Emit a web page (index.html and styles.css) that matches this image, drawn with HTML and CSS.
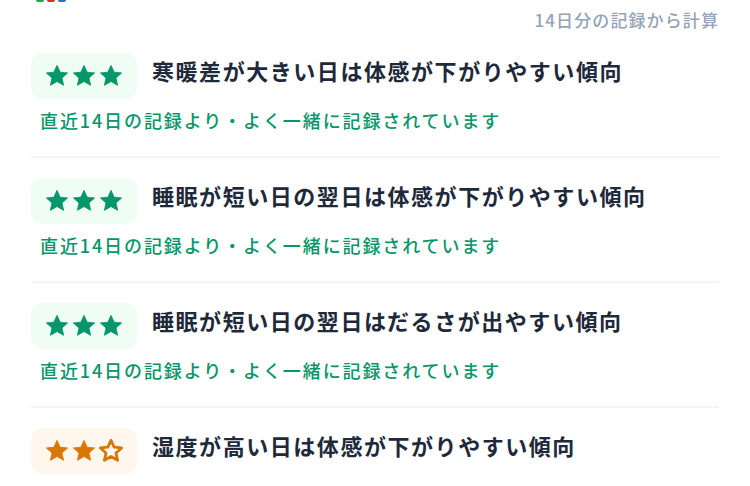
FILE: index.html
```html
<!DOCTYPE html>
<html lang="ja">
<head>
<meta charset="utf-8">
<link rel="stylesheet" href="styles.css">
</head>
<body>
<div class="page">
  <div class="top">
    <div class="logo"><span class="sq g"></span><span class="sq r"></span><span class="sq b"></span></div>
    <div class="basis">14日分の記録から計算</div>
  </div>

  <div class="item">
    <div class="row">
      <div class="badge high">
        <svg class="star" viewBox="0 0 24 24"><path d="M12 2.2l2.9 6.3 6.9.7-5.2 4.6 1.5 6.8L12 17.1l-6.1 3.5 1.5-6.8-5.2-4.6 6.9-.7z"/></svg>
        <svg class="star" viewBox="0 0 24 24"><path d="M12 2.2l2.9 6.3 6.9.7-5.2 4.6 1.5 6.8L12 17.1l-6.1 3.5 1.5-6.8-5.2-4.6 6.9-.7z"/></svg>
        <svg class="star" viewBox="0 0 24 24"><path d="M12 2.2l2.9 6.3 6.9.7-5.2 4.6 1.5 6.8L12 17.1l-6.1 3.5 1.5-6.8-5.2-4.6 6.9-.7z"/></svg>
      </div>
      <div class="title">寒暖差が大きい日は体感が下がりやすい傾向</div>
    </div>
    <div class="sub high">直近14日の記録より・よく一緒に記録されています</div>
  </div>

  <div class="item">
    <div class="row">
      <div class="badge high">
        <svg class="star" viewBox="0 0 24 24"><path d="M12 2.2l2.9 6.3 6.9.7-5.2 4.6 1.5 6.8L12 17.1l-6.1 3.5 1.5-6.8-5.2-4.6 6.9-.7z"/></svg>
        <svg class="star" viewBox="0 0 24 24"><path d="M12 2.2l2.9 6.3 6.9.7-5.2 4.6 1.5 6.8L12 17.1l-6.1 3.5 1.5-6.8-5.2-4.6 6.9-.7z"/></svg>
        <svg class="star" viewBox="0 0 24 24"><path d="M12 2.2l2.9 6.3 6.9.7-5.2 4.6 1.5 6.8L12 17.1l-6.1 3.5 1.5-6.8-5.2-4.6 6.9-.7z"/></svg>
      </div>
      <div class="title">睡眠が短い日の翌日は体感が下がりやすい傾向</div>
    </div>
    <div class="sub high">直近14日の記録より・よく一緒に記録されています</div>
  </div>

  <div class="item">
    <div class="row">
      <div class="badge high">
        <svg class="star" viewBox="0 0 24 24"><path d="M12 2.2l2.9 6.3 6.9.7-5.2 4.6 1.5 6.8L12 17.1l-6.1 3.5 1.5-6.8-5.2-4.6 6.9-.7z"/></svg>
        <svg class="star" viewBox="0 0 24 24"><path d="M12 2.2l2.9 6.3 6.9.7-5.2 4.6 1.5 6.8L12 17.1l-6.1 3.5 1.5-6.8-5.2-4.6 6.9-.7z"/></svg>
        <svg class="star" viewBox="0 0 24 24"><path d="M12 2.2l2.9 6.3 6.9.7-5.2 4.6 1.5 6.8L12 17.1l-6.1 3.5 1.5-6.8-5.2-4.6 6.9-.7z"/></svg>
      </div>
      <div class="title">睡眠が短い日の翌日はだるさが出やすい傾向</div>
    </div>
    <div class="sub high">直近14日の記録より・よく一緒に記録されています</div>
  </div>

  <div class="item">
    <div class="row">
      <div class="badge mid">
        <svg class="star" viewBox="0 0 24 24"><path d="M12 2.2l2.9 6.3 6.9.7-5.2 4.6 1.5 6.8L12 17.1l-6.1 3.5 1.5-6.8-5.2-4.6 6.9-.7z"/></svg>
        <svg class="star" viewBox="0 0 24 24"><path d="M12 2.2l2.9 6.3 6.9.7-5.2 4.6 1.5 6.8L12 17.1l-6.1 3.5 1.5-6.8-5.2-4.6 6.9-.7z"/></svg>
        <svg class="star outline" viewBox="0 0 24 24"><path d="M12 2.2l2.9 6.3 6.9.7-5.2 4.6 1.5 6.8L12 17.1l-6.1 3.5 1.5-6.8-5.2-4.6 6.9-.7z"/></svg>
      </div>
      <div class="title">湿度が高い日は体感が下がりやすい傾向</div>
    </div>
    <div class="sub mid">直近14日の記録より・ときどき一緒に記録されています</div>
  </div>
</div>
</body>
</html>
```

FILE: styles.css
```css
html, body {
  margin: 0;
  background: #ffffff;
}
body {
  font-family: "Noto Sans CJK JP", "Noto Sans", sans-serif;
  color: #1e293b;
}
.page {
  padding: 0 31px;
}
.top {
  display: flex;
  justify-content: space-between;
  align-items: flex-start;
  height: 33px;
}
.logo {
  display: flex;
  gap: 3px;
  margin-top: -6px;
  margin-left: 5px;
}
.sq {
  width: 8px;
  height: 8px;
  border-radius: 2px;
}
.sq.g { background: #22a447; }
.sq.r { background: #d0312d; }
.sq.b { background: #2f6fd0; }
.basis {
  margin-top: 8px;
  font-size: 17px;
  line-height: 24px;
  color: #94a3b8;
  font-weight: 500;
  letter-spacing: 1.1px;
}
.item {
  padding: 20px 0 23px;
  border-bottom: 2px solid #f1f5f9;
}
.row {
  display: flex;
  align-items: flex-start;
  gap: 15px;
}
.badge {
  width: 106px;
  height: 46px;
  box-sizing: border-box;
  border-radius: 12px;
  display: flex;
  align-items: center;
  justify-content: center;
  gap: 1px;
  flex-shrink: 0;
}
.badge.high { background: #f0fdf4; color: #059669; }
.badge.mid { background: #fff7ed; color: #d97706; }
.star {
  width: 26px;
  height: 26px;
  fill: currentColor;
  stroke: currentColor;
  stroke-width: 0.8;
  stroke-linejoin: round;
}
.star.outline {
  fill: none;
  stroke-width: 2.6;
}
.title {
  padding-top: 2px;
  font-size: 22px;
  line-height: 30px;
  font-weight: 700;
  color: #1e293b;
  letter-spacing: 1.55px;
}
.sub {
  margin-top: 8px;
  padding-left: 9px;
  font-size: 18px;
  line-height: 26px;
  font-weight: 500;
  letter-spacing: 1.9px;
}
.sub.high { color: #059669; }
.sub.mid { color: #d97706; }
```
